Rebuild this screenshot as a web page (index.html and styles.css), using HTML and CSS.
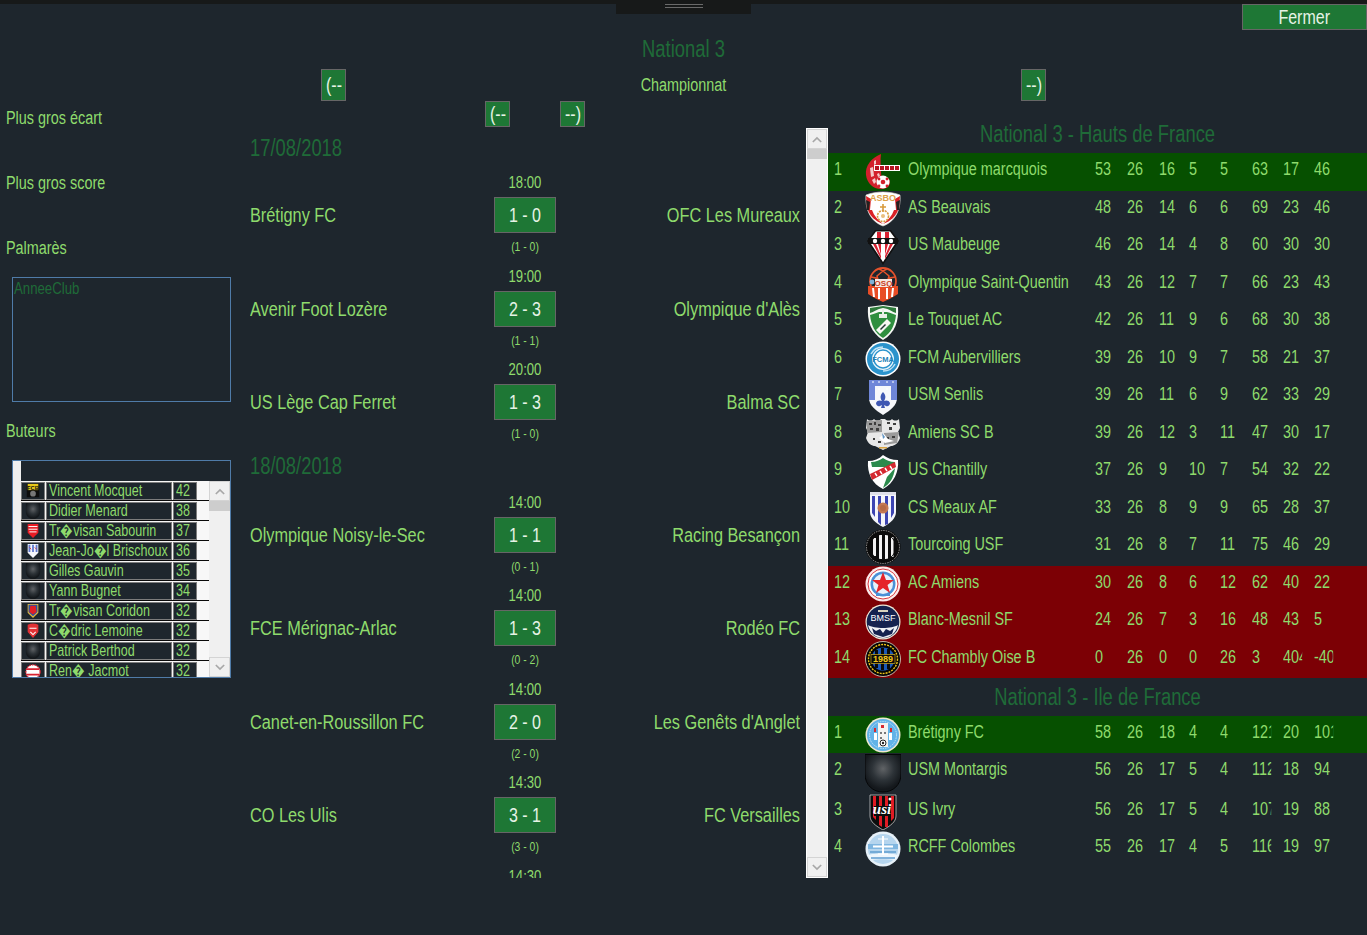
FILE: index.html
```html
<!DOCTYPE html>
<html lang="fr">
<head>
<meta charset="utf-8">
<title>National 3</title>
<link rel="stylesheet" href="styles.css">
</head>
<body>
<svg class="sprite" xmlns="http://www.w3.org/2000/svg" aria-hidden="true">
  <defs>
    <radialGradient id="gShield" cx="50%" cy="38%" r="55%"><stop offset="0" stop-color="#606366"/><stop offset=".55" stop-color="#2d3338"/><stop offset="1" stop-color="#14181c"/></radialGradient>
  </defs>
  <symbol id="l-marcq" viewBox="0 0 36 36">
    <path d="M16 0C6 4 0 12 1 21c1 8 7 14 15 14 6 0 9-3 9-7 0-4-3-5-6-4-2 0-3-2-3-6 0-6-1-12 0-18z" fill="#d3202c"/>
    <path d="M5 14l3-1 1 9-3 1zM7 26l3-2 1 4-2 2zM9 7l2-1 0 4-2 1zM12 20l2-1 1 3-2 1z" fill="#f3c9c9"/>
    <rect x="9" y="11" width="26" height="6" fill="#fff"/>
    <path d="M10 12h4v4h-4zM15 12h4v4h-4zM20 12h4v4h-4zM25 12h4v4h-4zM30 12h4v4h-4z" fill="#b51522"/>
    <circle cx="18" cy="28" r="6.500" fill="#fff"/><circle cx="18" cy="28" r="2.300" fill="#d3202c"/><circle cx="14" cy="25" r="1.400" fill="#d3202c"/><circle cx="22" cy="25" r="1.400" fill="#d3202c"/><circle cx="14" cy="32" r="1.400" fill="#d3202c"/><circle cx="22" cy="32" r="1.400" fill="#d3202c"/>
  </symbol>
  <symbol id="l-asbo" viewBox="0 0 36 36">
    <path d="M18 1c6 0 12 1 17 3 1 12-3 26-17 31C4 30 0 16 1 4c5-2 11-3 17-3z" fill="#fff" stroke="#e5e1dc" stroke-width=".6"/>
    <path d="M1 5l5 3-1 11-3 0zM35 5l-5 3 1 11 3 0zM3 19l4 0c2 6 6 10 11 14C10 30 5 25 3 19zM33 19l-4 0c-2 6-6 10-11 14 8-3 13-8 15-14z" fill="#da2026"/>
    <path d="M1 9l4 2-1 8-2 0zM35 9l-4 2 1 8 2 0z" fill="#23211f"/>
    <text x="18" y="10" text-anchor="middle" class="logo-t" font-size="9" fill="#dca14a">ASBO</text>
    <circle cx="18" cy="25" r="5.500" fill="none" stroke="#d79a3c" stroke-width="1.600" stroke-dasharray="2 1"/><path d="M18 13v8M15 16h6" stroke="#d79a3c" stroke-width="1.600"/><circle cx="18" cy="25" r="2" fill="#e9bf7e"/>
  </symbol>
  <symbol id="l-maub" viewBox="0 0 36 36">
    <path d="M10 1h16l8 11-16 24L2 12z" fill="#111"/>
    <path d="M11 2.500h14L32 12 18 33 4 12z" fill="#fff"/>
    <path d="M12 3h4v6h-4zM20 3h4v6h-4zM8 15h3l5 12 0 3zM13 15h3v11zM20 15h3l-3 11zM25 15h3l-8 15 0-3z" fill="#d92332"/>
    <path d="M3 9h30v6H3z" fill="#111"/>
    <circle cx="10" cy="12" r="2.200" fill="#fff"/><circle cx="18" cy="12" r="2.200" fill="#fff"/><circle cx="26" cy="12" r="2.200" fill="#fff"/>
  </symbol>
  <symbol id="l-osq" viewBox="0 0 36 36">
    <circle cx="18" cy="15" r="13" fill="#1e262d" stroke="#e4522c" stroke-width="1.800"/>
    <path d="M18 5l6 5-2 7h-8l-2-7zM6 11l5 1 2 7-5 3M30 11l-5 1-2 7 5 3M14 3l4 2 4-2" fill="none" stroke="#e4522c" stroke-width="1.500"/>
    <path d="M3 20h30v8c-5 3-10 6-15 8-5-2-10-5-15-8z" fill="#e84d26"/>
    <path d="M7 22h2l1 9H8zM13 22h2v11h-2zM21 22h2v11h-2zM27 22h2l-1 9h-2z" fill="#fff"/>
    <circle cx="7" cy="16" r="2.400" fill="#7fb3d8"/>
    <rect x="10" y="13" width="17" height="8" fill="#f6e9e2"/>
    <text x="18.500" y="20" text-anchor="middle" class="logo-t" font-size="8" fill="#c9401e">OSQ</text>
  </symbol>
  <symbol id="l-touq" viewBox="0 0 36 36">
    <path d="M3 3l15-2 15 2c1 14-3 26-15 33C6 29 2 17 3 3z" fill="#f5f8f4"/>
    <path d="M5 11c4-1 6-2 9-3h8c4 1 6 2 9 3-1 10-5 18-13 23C10 29 6 21 5 11z" fill="#2f8f3f"/>
    <path d="M5 4l13-2 13 2v5c-4-1-6-4-13-5C12 5 9 8 5 9z" fill="#2d7a3b"/>
    <path d="M14 10h8v4h-8zM17 5h2v5h-2z" fill="#e9efe6"/>
    <path d="M11 26l11-11 4 4-11 11z" fill="#f6f7f2"/>
    <path d="M15 25l5-5 1 1-5 5z" fill="#233"/>
  </symbol>
  <symbol id="l-fcm" viewBox="0 0 36 36">
    <circle cx="18" cy="18" r="17.500" fill="#fff"/>
    <circle cx="18" cy="18" r="16" fill="#2b93cc"/>
    <circle cx="18" cy="18" r="11" fill="#e7f4fb"/>
    <circle cx="18" cy="18" r="9" fill="#fff" stroke="#2b93cc" stroke-width="1.400"/>
    <path d="M6 13c2-4 6-7 12-7M30 23c-2 4-6 7-12 7" stroke="#bfe2f4" stroke-width="1.500" fill="none"/>
    <text x="18" y="21" text-anchor="middle" class="logo-t" font-size="7.500" fill="#1e7fb7">FCMA</text>
  </symbol>
  <symbol id="l-senlis" viewBox="0 0 36 36">
    <path d="M4 1h28v18c0 7-6 12-14 17C10 31 4 26 4 19z" fill="#f6f7fb"/>
    <path d="M4 1h28v6H4zM4 7h6v14H4zM26 7h6v14h-6z" fill="#6f86d8"/>
    <path d="M18 13c3 3 3 6 1 9 2-1 5-1 6 2 0 2-2 4-4 3l-2-1 1 3h-4l1-3-2 1c-2 1-4-1-4-3 1-3 4-3 6-2-2-3-2-6 1-9z" fill="#3f57b3"/>
    <path d="M7 3h2M13 3h2M21 3h2M27 3h2M13 10h2M21 10h2" stroke="#fff" stroke-width="1.200"/>
  </symbol>
  <symbol id="l-amiens" viewBox="0 0 36 36">
    <path d="M2 3c2 2 5 2 7 0 2 2 5 2 7 0h4c2 2 5 2 7 0 2 2 5 2 7 0l1 9-2 4 2 6c-2 6-6 8-9 8l-8 4-8-4c-3 0-7-2-9-8l2-6-2-4z" fill="#e8e8e8"/>
    <path d="M2 5l15-1 0 12-15 1zM19 17l15-1-2 11-13 2z" fill="#9b9b9b"/>
    <path d="M4 7h3v2H4zM9 6h2v3H9zM13 8h3v2h-3zM5 12h3v2H5zM11 12h3v3h-3zM22 6h3v2h-3zM28 7h3v2h-3zM24 11h3v3h-3zM21 21h3v2h-3zM27 20h3v2h-3zM8 22h2v2H8zM13 25h3v2h-3z" fill="#3e3e3e"/>
    <path d="M14 22l5-4 4 5 6 2-9 2z" fill="#fff"/><path d="M17 17l3 4-2 2z" fill="#5f94c4"/>
    <rect x="14" y="31" width="8" height="1.500" fill="#d9a441"/>
  </symbol>
  <symbol id="l-chant" viewBox="0 0 36 36">
    <path d="M3 7c6 0 11-2 15-6 4 3 9 5 15 5 1 12-4 23-15 29C7 30 2 19 3 7z" fill="#fff"/>
    <path d="M6 8c5 0 9-2 12-4 3 2 7 4 12 4l-1 5H7z" fill="#2b8a4c"/>
    <path d="M18 34c7-4 11-11 12-20L22 23z" fill="#2b8a4c"/>
    <path d="M5 20L30 8l1 5-24 13z" fill="#d4282f"/>
    <path d="M10 19l2 3M15 17l2 3M20 14l2 3M25 12l2 3" stroke="#fff" stroke-width="1.400"/>
  </symbol>
  <symbol id="l-meaux" viewBox="0 0 36 36">
    <path d="M5 1h26v20c0 6-5 11-13 15C10 32 5 27 5 21z" fill="#f5f6fb"/>
    <path d="M7 5h3v21l-3-4zM13 5h3v29l-3-3zM20 5h3v28l-3 1zM26 5h3v17l-3 5z" fill="#3d45b2"/>
    <path d="M5 1h26v3H5z" fill="#dfe0ea"/>
    <circle cx="18" cy="17" r="5.500" fill="#c47852"/><circle cx="18" cy="17" r="3" fill="#b66a45"/>
  </symbol>
  <symbol id="l-tourc" viewBox="0 0 36 36">
    <circle cx="18" cy="18" r="17.500" fill="#0b0b0b"/>
    <circle cx="18" cy="18" r="16.500" fill="none" stroke="#cfcfcf" stroke-width=".7" stroke-dasharray="1.500 1"/>
    <path d="M8 9h3v18H8zM14 6h3v24h-3zM20 6h3v24h-3zM26 8h2.500v20H26z" fill="#f2f2f2"/>
    <circle cx="18" cy="18" r="13" fill="none" stroke="#0b0b0b" stroke-width="1"/>
  </symbol>
  <symbol id="l-aca" viewBox="0 0 36 36">
    <circle cx="18" cy="18" r="17.500" fill="#fbe9ea"/>
    <circle cx="18" cy="18" r="15" fill="#fff" stroke="#d93a3f" stroke-width="1"/>
    <circle cx="18" cy="18" r="12.500" fill="#4a90d6"/>
    <circle cx="18" cy="18" r="10" fill="#e7f1fa"/>
    <path d="M18 6l3 8h8l-6.500 5 2.500 8-7-5-7 5 2.500-8L7 14h8z" fill="#e5242a"/>
    <path d="M11 29h14" stroke="#4a90d6" stroke-width="2"/>
  </symbol>
  <symbol id="l-bm" viewBox="0 0 36 36">
    <circle cx="18" cy="18" r="17.500" fill="#f0ead9"/>
    <circle cx="18" cy="18" r="16.300" fill="#15224f"/>
    <path d="M3 21c6 4 24 4 30 0-2 9-9 13-15 13S5 30 3 21z" fill="#eef0f4"/>
    <path d="M7 24l4 3 4-2 3 4 3-4 4 2 4-3-2 6-9 3-9-3z" fill="#15224f"/>
    <text x="18" y="17" text-anchor="middle" class="logo-r" font-size="9" fill="#fff">BMSF</text>
    <path d="M13 6h10v2H13z" fill="#d9d3bd"/>
  </symbol>
  <symbol id="l-chamb" viewBox="0 0 36 36">
    <circle cx="18" cy="18" r="17.500" fill="#050505" stroke="#e6e3d2" stroke-width=".8"/>
    <circle cx="18" cy="18" r="14.500" fill="none" stroke="#f0c419" stroke-width="1.400" stroke-dasharray="2 1"/>
    <circle cx="18" cy="18" r="11.500" fill="#1a58b8"/>
    <path d="M10 9h3v18h-3zM16 7h3v22h-3zM22 8h3v20h-3z" fill="#0a0a0a"/>
    <rect x="6" y="13.500" width="24" height="9" fill="#0a0a0a" stroke="#f0c419" stroke-width=".6"/>
    <text x="18" y="21" text-anchor="middle" class="logo-t" font-size="9" fill="#f0c419">1989</text>
  </symbol>
  <symbol id="l-bret" viewBox="0 0 36 36">
    <circle cx="18" cy="18" r="17.500" fill="#f0ead0"/>
    <circle cx="18" cy="18" r="16" fill="#62b3e8"/>
    <circle cx="18" cy="18" r="13.500" fill="none" stroke="#d5ecfa" stroke-width=".8" stroke-dasharray="1.500 1"/>
    <path d="M13 6h10v24H13z" fill="#f3f3f0"/>
    <path d="M9 11h2v4H9zM25 11h2v4h-2zM16 8h3v3h-3z" fill="#d42a32"/>
    <path d="M9 16h3v7H9zM24 16h3v7h-3z" fill="#fff"/>
    <path d="M15 15h2v2h-2zM19 15h2v2h-2zM15 20h2v2h-2z" fill="#777"/>
    <circle cx="18" cy="26" r="3" fill="#fff" stroke="#222" stroke-width="1"/><circle cx="18" cy="26" r="1.200" fill="#222"/>
  </symbol>
  <symbol id="l-def" viewBox="0 0 36 39">
    <path d="M0 .500h36V20c0 11-8 18-18 18S0 31 0 20z" fill="url(#gShield)" stroke="#060708" stroke-width="1"/>
  </symbol>
  <symbol id="l-ivry" viewBox="0 0 36 36">
    <path d="M5 1h26v21c0 6-6 10-13 14C11 32 5 28 5 22z" fill="#0c0c0c" stroke="#ddd" stroke-width=".7"/>
    <path d="M8 2h3v24l-3-3zM14 2h3v31l-3-2zM20 2h3v31l-3 0zM26 2h3v22l-3 3z" fill="#e01b24"/>
    <path d="M9 12h16v10H9z" fill="#0c0c0c"/>
    <text x="17" y="20" text-anchor="middle" class="logo-s" font-size="15" fill="#fff">usi</text>
    <circle cx="25" cy="5" r="1.500" fill="#fff"/>
  </symbol>
  <symbol id="l-col" viewBox="0 0 36 36">
    <circle cx="18" cy="18" r="17.500" fill="#e6f0f8"/>
    <circle cx="18" cy="18" r="15" fill="#b5d5ee"/>
    <path d="M3 24c6-2 24-2 30 0l-3 5c-6-1-18-1-24 0z" fill="#eef6fc"/>
    <path d="M5 21h26M6 27h24" stroke="#5f9dd0" stroke-width="1.400"/>
    <path d="M3 13h30v5H3z" fill="#7fb6e0"/>
    <path d="M17 5h2v19h-2zM8 14.500h20v2H8z" fill="#fff"/>
    <path d="M13 8h10M13 23h10" stroke="#fff" stroke-width="1.200"/>
  </symbol>
  <symbol id="s-fcb" viewBox="0 0 20 18">
    <path d="M3 1h14v15H3z" fill="#0c0c0c"/><path d="M4 1h12v7H4z" fill="#e8c81a"/>
    <text x="10" y="7.500" text-anchor="middle" class="logo-t" font-size="6.500" fill="#111">FCB</text>
    <circle cx="10" cy="12" r="3.200" fill="#777"/>
  </symbol>
  <symbol id="s-red" viewBox="0 0 20 18">
    <path d="M4 1h12v10l-6 6-6-6z" fill="#e81c24"/>
    <path d="M5 4h10M5 7h10M6 10h8" stroke="#fff" stroke-width="1.100"/>
  </symbol>
  <symbol id="s-blue" viewBox="0 0 20 18">
    <path d="M4 1h12v10l-6 6-6-6z" fill="#f4f6fb"/>
    <path d="M5 2h2v8H5zM9 2h2v8H9zM13 2h2v8h-2z" fill="#5f78cf"/>
    <path d="M6 5l2 2M12 5l2 2" stroke="#d8303a" stroke-width="1"/>
  </symbol>
  <symbol id="s-blason" viewBox="0 0 20 18">
    <path d="M4 1h12v10l-6 6-6-6z" fill="#e8b93a"/>
    <path d="M5 2h10v8l-5 5-5-5z" fill="#2452a8"/>
    <path d="M7 3h6l1 7-4 3-4-3z" fill="#e01f26"/>
  </symbol>
  <symbol id="s-lem" viewBox="0 0 20 18">
    <path d="M4 2c4-2 8-2 12 0v8l-6 7-6-7z" fill="#e23135"/>
    <path d="M6 6h8M7 10l3 3 3-3" stroke="#fff" stroke-width="1.200" fill="none"/>
  </symbol>
  <symbol id="s-jac" viewBox="0 0 20 18">
    <circle cx="10" cy="10" r="8" fill="#fff"/>
    <path d="M3 7h14M3 13h14" stroke="#d92332" stroke-width="2"/>
    <circle cx="10" cy="10" r="8" fill="none" stroke="#d92332" stroke-width="1.400" stroke-dasharray="2 1"/>
  </symbol>
  <symbol id="s-def" viewBox="0 0 20 18">
    <path d="M2 0h16v10c0 5-4 8-8 8s-8-3-8-8z" fill="url(#gShield)"/>
  </symbol>
</svg>

<div class="topbar"><div class="handle"><span class="grip"></span></div></div>

<header class="head">
  <div class="close-row"><button class="btn btn-close"><span class="sq">Fermer</span></button></div>
  <h1 class="title">National 3</h1>
  <div class="nav-row">
    <button class="btn btn-nav"><span class="sq">(--</span></button>
    <div class="competition">Championnat</div>
    <button class="btn btn-nav"><span class="sq">--)</span></button>
  </div>
</header>

<main class="layout">
  <aside class="side">
    <div class="side-label">Plus gros écart</div>
    <div class="side-label">Plus gros score</div>
    <div class="side-label side-label-tight">Palmarès</div>
    <div class="box palmares"><span class="sq-l">AnneeClub</span></div>
    <div class="side-label side-label-scorers">Buteurs</div>
    <div class="box scorers">
      <div class="scorers-strip"></div>
      <div class="scorers-main">
        <div class="scorers-head"></div>
        <div class="scorer"><span class="cell cell-logo"><svg class="mini"><use href="#s-fcb"/></svg></span><span class="cell cell-name"><span class="sq-l">Vincent Mocquet</span></span><span class="cell cell-num"><span class="sq-l">42</span></span></div>
        <div class="scorer"><span class="cell cell-logo"><svg class="mini"><use href="#s-def"/></svg></span><span class="cell cell-name"><span class="sq-l">Didier Menard</span></span><span class="cell cell-num"><span class="sq-l">38</span></span></div>
        <div class="scorer"><span class="cell cell-logo"><svg class="mini"><use href="#s-red"/></svg></span><span class="cell cell-name"><span class="sq-l">Tr�visan Sabourin</span></span><span class="cell cell-num"><span class="sq-l">37</span></span></div>
        <div class="scorer"><span class="cell cell-logo"><svg class="mini"><use href="#s-blue"/></svg></span><span class="cell cell-name"><span class="sq-l">Jean-Jo�l Brischoux</span></span><span class="cell cell-num"><span class="sq-l">36</span></span></div>
        <div class="scorer"><span class="cell cell-logo"><svg class="mini"><use href="#s-def"/></svg></span><span class="cell cell-name"><span class="sq-l">Gilles Gauvin</span></span><span class="cell cell-num"><span class="sq-l">35</span></span></div>
        <div class="scorer"><span class="cell cell-logo"><svg class="mini"><use href="#s-def"/></svg></span><span class="cell cell-name"><span class="sq-l">Yann Bugnet</span></span><span class="cell cell-num"><span class="sq-l">34</span></span></div>
        <div class="scorer"><span class="cell cell-logo"><svg class="mini"><use href="#s-blason"/></svg></span><span class="cell cell-name"><span class="sq-l">Tr�visan Coridon</span></span><span class="cell cell-num"><span class="sq-l">32</span></span></div>
        <div class="scorer"><span class="cell cell-logo"><svg class="mini"><use href="#s-lem"/></svg></span><span class="cell cell-name"><span class="sq-l">C�dric Lemoine</span></span><span class="cell cell-num"><span class="sq-l">32</span></span></div>
        <div class="scorer"><span class="cell cell-logo"><svg class="mini"><use href="#s-def"/></svg></span><span class="cell cell-name"><span class="sq-l">Patrick Berthod</span></span><span class="cell cell-num"><span class="sq-l">32</span></span></div>
        <div class="scorer"><span class="cell cell-logo"><svg class="mini"><use href="#s-jac"/></svg></span><span class="cell cell-name"><span class="sq-l">Ren� Jacmot</span></span><span class="cell cell-num"><span class="sq-l">32</span></span></div>
      </div>
      <div class="scrollbar scrollbar-mini">
        <span class="sb-btn"><svg class="chev" viewBox="0 0 12 8"><path d="M1 7l5-5 5 5"/></svg></span>
        <span class="sb-thumb"></span>
        <span class="sb-track"></span>
        <span class="sb-btn"><svg class="chev" viewBox="0 0 12 8"><path d="M1 1l5 5 5-5"/></svg></span>
      </div>
    </div>
  </aside>

  <section class="center">
    <div class="day-nav">
      <button class="btn btn-day"><span class="sq">(--</span></button>
      <button class="btn btn-day"><span class="sq">--)</span></button>
    </div>
    <div class="center-body">
      <div class="matches">
        <h2 class="date">17/08/2018</h2>
        <div class="match"><div class="time">18:00</div><div class="team home">Brétigny FC</div><div class="score"><span class="sq">1 - 0</span></div><div class="team away">OFC Les Mureaux</div><div class="half">(1 - 0)</div></div>
        <div class="match"><div class="time">19:00</div><div class="team home">Avenir Foot Lozère</div><div class="score"><span class="sq">2 - 3</span></div><div class="team away">Olympique d'Alès</div><div class="half">(1 - 1)</div></div>
        <div class="match"><div class="time">20:00</div><div class="team home">US Lège Cap Ferret</div><div class="score"><span class="sq">1 - 3</span></div><div class="team away">Balma SC</div><div class="half">(1 - 0)</div></div>
        <h2 class="date">18/08/2018</h2>
        <div class="match"><div class="time">14:00</div><div class="team home">Olympique Noisy-le-Sec</div><div class="score"><span class="sq">1 - 1</span></div><div class="team away">Racing Besançon</div><div class="half">(0 - 1)</div></div>
        <div class="match"><div class="time">14:00</div><div class="team home">FCE Mérignac-Arlac</div><div class="score"><span class="sq">1 - 3</span></div><div class="team away">Rodéo FC</div><div class="half">(0 - 2)</div></div>
        <div class="match"><div class="time">14:00</div><div class="team home">Canet-en-Roussillon FC</div><div class="score"><span class="sq">2 - 0</span></div><div class="team away">Les Genêts d'Anglet</div><div class="half">(2 - 0)</div></div>
        <div class="match"><div class="time">14:30</div><div class="team home">CO Les Ulis</div><div class="score"><span class="sq">3 - 1</span></div><div class="team away">FC Versailles</div><div class="half">(3 - 0)</div></div>
        <div class="match"><div class="time">14:30</div></div>
      </div>
      <div class="scrollbar scrollbar-main">
        <span class="sb-btn"><svg class="chev" viewBox="0 0 12 8"><path d="M1 7l5-5 5 5"/></svg></span>
        <span class="sb-thumb"></span>
        <span class="sb-track"></span>
        <span class="sb-btn"><svg class="chev" viewBox="0 0 12 8"><path d="M1 1l5 5 5-5"/></svg></span>
      </div>
    </div>
  </section>

  <section class="standings">
    <h2 class="group group-first">National 3 - Hauts de France</h2>
    <div class="st up"><span class="pos">1</span><svg class="crest"><use href="#l-marcq"/></svg><span class="club">Olympique marcquois</span><span class="n">53</span><span class="n">26</span><span class="n">16</span><span class="n">5</span><span class="n">5</span><span class="n">63</span><span class="n">17</span><span class="n">46</span></div>
    <div class="st"><span class="pos">2</span><svg class="crest"><use href="#l-asbo"/></svg><span class="club">AS Beauvais</span><span class="n">48</span><span class="n">26</span><span class="n">14</span><span class="n">6</span><span class="n">6</span><span class="n">69</span><span class="n">23</span><span class="n">46</span></div>
    <div class="st"><span class="pos">3</span><svg class="crest"><use href="#l-maub"/></svg><span class="club">US Maubeuge</span><span class="n">46</span><span class="n">26</span><span class="n">14</span><span class="n">4</span><span class="n">8</span><span class="n">60</span><span class="n">30</span><span class="n">30</span></div>
    <div class="st"><span class="pos">4</span><svg class="crest"><use href="#l-osq"/></svg><span class="club">Olympique Saint-Quentin</span><span class="n">43</span><span class="n">26</span><span class="n">12</span><span class="n">7</span><span class="n">7</span><span class="n">66</span><span class="n">23</span><span class="n">43</span></div>
    <div class="st"><span class="pos">5</span><svg class="crest"><use href="#l-touq"/></svg><span class="club">Le Touquet AC</span><span class="n">42</span><span class="n">26</span><span class="n">11</span><span class="n">9</span><span class="n">6</span><span class="n">68</span><span class="n">30</span><span class="n">38</span></div>
    <div class="st"><span class="pos">6</span><svg class="crest"><use href="#l-fcm"/></svg><span class="club">FCM Aubervilliers</span><span class="n">39</span><span class="n">26</span><span class="n">10</span><span class="n">9</span><span class="n">7</span><span class="n">58</span><span class="n">21</span><span class="n">37</span></div>
    <div class="st"><span class="pos">7</span><svg class="crest"><use href="#l-senlis"/></svg><span class="club">USM Senlis</span><span class="n">39</span><span class="n">26</span><span class="n">11</span><span class="n">6</span><span class="n">9</span><span class="n">62</span><span class="n">33</span><span class="n">29</span></div>
    <div class="st"><span class="pos">8</span><svg class="crest"><use href="#l-amiens"/></svg><span class="club">Amiens SC B</span><span class="n">39</span><span class="n">26</span><span class="n">12</span><span class="n">3</span><span class="n">11</span><span class="n">47</span><span class="n">30</span><span class="n">17</span></div>
    <div class="st"><span class="pos">9</span><svg class="crest"><use href="#l-chant"/></svg><span class="club">US Chantilly</span><span class="n">37</span><span class="n">26</span><span class="n">9</span><span class="n">10</span><span class="n">7</span><span class="n">54</span><span class="n">32</span><span class="n">22</span></div>
    <div class="st"><span class="pos">10</span><svg class="crest"><use href="#l-meaux"/></svg><span class="club">CS Meaux AF</span><span class="n">33</span><span class="n">26</span><span class="n">8</span><span class="n">9</span><span class="n">9</span><span class="n">65</span><span class="n">28</span><span class="n">37</span></div>
    <div class="st"><span class="pos">11</span><svg class="crest"><use href="#l-tourc"/></svg><span class="club">Tourcoing USF</span><span class="n">31</span><span class="n">26</span><span class="n">8</span><span class="n">7</span><span class="n">11</span><span class="n">75</span><span class="n">46</span><span class="n">29</span></div>
    <div class="st down"><span class="pos">12</span><svg class="crest"><use href="#l-aca"/></svg><span class="club">AC Amiens</span><span class="n">30</span><span class="n">26</span><span class="n">8</span><span class="n">6</span><span class="n">12</span><span class="n">62</span><span class="n">40</span><span class="n">22</span></div>
    <div class="st down"><span class="pos">13</span><svg class="crest"><use href="#l-bm"/></svg><span class="club">Blanc-Mesnil SF</span><span class="n">24</span><span class="n">26</span><span class="n">7</span><span class="n">3</span><span class="n">16</span><span class="n">48</span><span class="n">43</span><span class="n">5</span></div>
    <div class="st down"><span class="pos">14</span><svg class="crest"><use href="#l-chamb"/></svg><span class="club">FC Chambly Oise B</span><span class="n">0</span><span class="n">26</span><span class="n">0</span><span class="n">0</span><span class="n">26</span><span class="n">3</span><span class="n">404</span><span class="n">-401</span></div>
    <h2 class="group">National 3 - Ile de France</h2>
    <div class="st up st-short"><span class="pos">1</span><svg class="crest"><use href="#l-bret"/></svg><span class="club">Brétigny FC</span><span class="n">58</span><span class="n">26</span><span class="n">18</span><span class="n">4</span><span class="n">4</span><span class="n">121</span><span class="n">20</span><span class="n">101</span></div>
    <div class="st st-tall"><span class="pos">2</span><svg class="crest crest-tall"><use href="#l-def"/></svg><span class="club">USM Montargis</span><span class="n">56</span><span class="n">26</span><span class="n">17</span><span class="n">5</span><span class="n">4</span><span class="n">112</span><span class="n">18</span><span class="n">94</span></div>
    <div class="st st-short"><span class="pos">3</span><svg class="crest"><use href="#l-ivry"/></svg><span class="club">US Ivry</span><span class="n">56</span><span class="n">26</span><span class="n">17</span><span class="n">5</span><span class="n">4</span><span class="n">107</span><span class="n">19</span><span class="n">88</span></div>
    <div class="st st-short"><span class="pos">4</span><svg class="crest"><use href="#l-col"/></svg><span class="club">RCFF Colombes</span><span class="n">55</span><span class="n">26</span><span class="n">17</span><span class="n">4</span><span class="n">5</span><span class="n">116</span><span class="n">19</span><span class="n">97</span></div>
  </section>
</main>
</body>
</html>
```

FILE: styles.css
```css
* { box-sizing: border-box; }
html, body { margin: 0; height: 100%; }
body {
  width: 1367px;
  height: 935px;
  overflow: hidden;
  background: #1e262d;
  color: #8edb6c;
  font-family: "Liberation Sans", Arial, sans-serif;
  font-size: 18px;
}
h1, h2 { margin: 0; font-weight: 400; }
.sprite { position: absolute; width: 0; height: 0; }

/* The source UI draws Arial condensed horizontally: squeeze real text to match */
.sq, .sq-l { display: inline-block; transform: scaleX(.8); white-space: nowrap; }
.sq { transform-origin: center; }
.sq-l { transform-origin: left center; }

.topbar { height: 4px; background: #171919; position: relative; }
.handle {
  position: absolute; left: 616px; top: 0; width: 135px; height: 14px;
  background: #171919; display: flex; justify-content: center; padding-top: 4px;
}
.grip { width: 38px; height: 4px; border-top: 1px solid #6a6a6a; border-bottom: 1px solid #6a6a6a; }

.btn {
  font-family: inherit; color: #e6f3e6; background: #1e7735;
  border: 1px solid #666; padding: 0; margin: 0; line-height: 1;
}
.close-row { display: flex; justify-content: flex-end; height: 26px; }
.btn-close { width: 125px; height: 26px; font-size: 20px; }
.title { height: 39px; line-height: 39px; text-align: center; font-size: 23px; color: #1f6b38; transform: scaleX(.8); }
.nav-row { display: flex; align-items: stretch; height: 32px; padding-left: 321px; }
.btn-nav { width: 25px; height: 32px; font-size: 20px; }
.competition { width: 675px; text-align: center; line-height: 32px; font-size: 18px; transform: scaleX(.8); }

.layout { display: grid; grid-template-columns: 250px 578px 539px; }

.side { padding-left: 6px; }
.side-label {
  height: 34px; line-height: 35px; margin-bottom: 31px; font-size: 18px;
  transform: scaleX(.8); transform-origin: left center; white-space: nowrap;
}
.side-label-tight { margin-bottom: 12px; }
.side-label-scorers { margin: 12px 0; }
.box { width: 219px; border: 1px solid #4f7ba8; margin-left: 6px; }
.palmares { height: 125px; font-size: 16.500px; color: #1f6b38; padding: 0 1px; line-height: 20px; }
.scorers { height: 218px; display: flex; overflow: hidden; }
.scorers-strip { width: 8px; background: #efefef; }
.scorers-main { width: 188px; overflow: hidden; }
.scorers-head { height: 20px; }
.scorer {
  height: 20px; display: flex; gap: 1px; padding: 1px 0 1px;
  background: #f7f7f7; border-bottom: 1px solid #0a0a0a;
  font-size: 15.700px; line-height: 15px;
}
.cell {
  display: block; height: 18px; background: #1e262d; border: 1px solid #7c7c7c;
  overflow: hidden; white-space: nowrap; padding-left: 2px;
}
.cell-logo { width: 24px; padding: 0; display: flex; justify-content: center; }
.cell-name { width: 126px; }
.cell-num { width: 24px; }
.mini { width: 20px; height: 16px; }

.scrollbar { display: flex; flex-direction: column; background: #f0f0f0; }
.scrollbar-mini { width: 21px; margin-top: 20px; }
.scrollbar-main { width: 22px; margin-left: 6px; border: 1px solid #fff; }
.sb-btn {
  display: flex; align-items: center; justify-content: center; height: 20px;
  flex: none; border: 1px solid #d4d4d4; background: #f0f0f0;
}
.sb-thumb { height: 10px; flex: none; background: #cdcdcd; }
.sb-track { flex: 1; }
.chev { width: 10px; height: 7px; fill: none; stroke: #a8a8a8; stroke-width: 2; }

.center { min-width: 0; }
.day-nav { display: flex; gap: 50px; height: 27px; padding-left: 235px; }
.btn-day { width: 25px; height: 26px; font-size: 20px; }
.center-body { display: flex; height: 750px; }
.matches { width: 550px; overflow: hidden; padding-top: 4px; }
.date {
  height: 31px; line-height: 33px; margin-bottom: 7px; font-size: 23px; color: #1f6b38;
  transform: scaleX(.8); transform-origin: left center;
}
.match + .date { margin-top: -1px; margin-bottom: 9px; }
.match {
  height: 93.500px; display: grid;
  grid-template-columns: 244px 62px 244px;
  grid-template-rows: 24px 39px 28px;
}
.time { grid-column: 2; grid-row: 1; text-align: center; line-height: 25px; font-size: 16px; transform: scaleX(.82); }
.team { grid-row: 2; align-self: center; line-height: 36px; margin-top: 3px; font-size: 20px; white-space: nowrap; transform: scaleX(.815); }
.home { grid-column: 1; transform-origin: left center; }
.away { grid-column: 3; text-align: right; transform-origin: right center; }
.score {
  grid-column: 2; grid-row: 2; margin-top: 3px; height: 36px; line-height: 34px;
  background: #1e7735; border: 1px solid #666; color: #e6f3e6;
  text-align: center; font-size: 20px;
}
.half { grid-column: 2; grid-row: 3; text-align: center; line-height: 27px; font-size: 13px; transform: scaleX(.8); white-space: nowrap; }

.standings { padding-top: 0; }
.group { height: 38px; line-height: 38px; text-align: center; font-size: 23px; color: #1f6b38; transform: scaleX(.8); }
.group-first { height: 52px; padding-top: 20px; line-height: 27px; }
.st {
  height: 37.500px; display: grid; align-items: start;
  grid-template-columns: 31px 36px 7px 187px 32px 32px 30px 31px 32px 31px 31px 25px;
  padding-left: 6px; line-height: 32px; font-size: 18px;
}
.st-short { height: 37px; }
.st-tall { height: 40px; }
.st .crest { grid-column: 2; align-self: center; }
.pos, .club, .n { transform: scaleX(.8); transform-origin: left center; white-space: nowrap; }
.club { grid-column: 4; }
.n { width: 24px; overflow: hidden; }
.up { background: #065000; }
.down { background: #7c0005; }
.crest { width: 36px; height: 36px; display: block; }
.crest-tall { height: 39px; }
.logo-t { font-family: "Liberation Sans", sans-serif; font-weight: 700; }
.logo-r { font-family: "Liberation Sans", sans-serif; }
.logo-s { font-family: "Liberation Serif", serif; font-style: italic; font-weight: 700; }
```
